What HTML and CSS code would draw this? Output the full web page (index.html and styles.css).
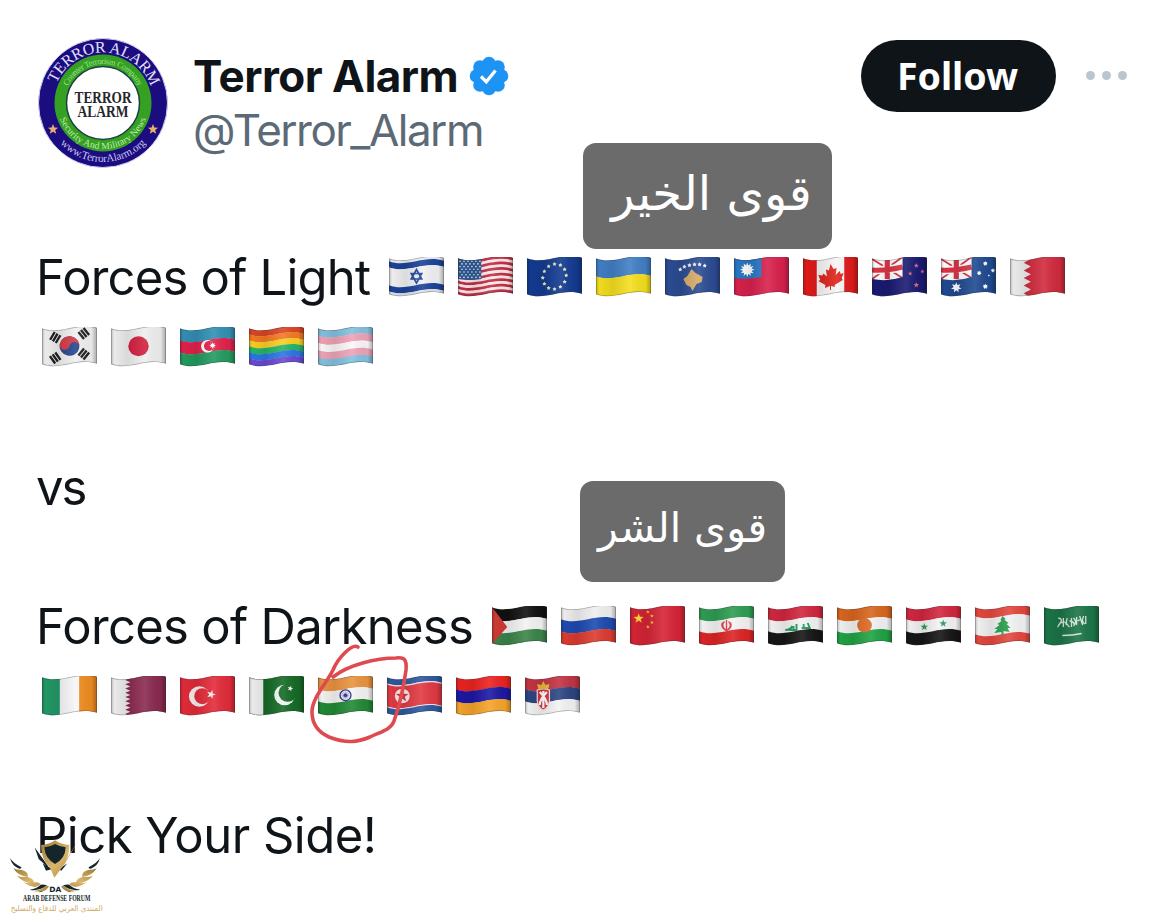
FILE: index.html
```html
<!DOCTYPE html>
<html lang="en">
<head>
  <meta charset="UTF-8" />
  <meta name="viewport" content="width=device-width, initial-scale=1.0"/>
  <title>Terror Alarm</title>
  <link rel="stylesheet" href="styles.css">
</head>
<body>
  <!-- shared flag outline and shading -->
  <svg class="defs" width="0" height="0">
    <defs>
      <clipPath id="wave"><path d="M0 1.300c18 7 34-7 54-.5v36c-20-6.500-36 7.500-54 .5z"/></clipPath>
      <linearGradient id="shade">
        <stop offset="0" stop-color="#000" stop-opacity=".22"/>
        <stop offset=".06" stop-color="#000" stop-opacity=".02"/>
        <stop offset=".3" stop-color="#000" stop-opacity=".09"/>
        <stop offset=".62" stop-color="#fff" stop-opacity=".1"/>
        <stop offset=".9" stop-color="#000" stop-opacity=".04"/>
        <stop offset="1" stop-color="#000" stop-opacity=".3"/>
      </linearGradient>
    </defs>
  </svg>

  <div class="post">
    <div class="header">
      <svg class="avatar" width="130" height="130" viewBox="-65 -65 130 130">
        <defs>
          <path id="arcTop" d="M-50.500 0A50.500 50.500 0 0 1 50.500 0"/>
          <path id="arcTopIn" d="M-39 0A39 39 0 0 1 39 0"/>
          <path id="arcBottom" d="M-59 0A59 59 0 0 0 59 0"/>
          <path id="arcBottomIn" d="M-46 0A46 46 0 0 0 46 0"/>
        </defs>
        <circle r="64.500" fill="#1b0c80" stroke="#cfcaf0"/>
        <circle r="48.500" fill="#35a021"/>
        <circle r="36.500" fill="#fff" stroke="#1c3f45" stroke-width="1.500"/>
        <g class="seal" text-anchor="middle">
          <text font-size="16" fill="#e4e0fa"><textPath href="#arcTop" startOffset="51%" textLength="122">TERROR ALARM</textPath></text>
          <text font-size="8.500" fill="#9be08b"><textPath href="#arcTopIn" startOffset="50%" textLength="88">Counter Terrorism Company</textPath></text>
          <text font-size="9.500" fill="#c3efb7"><textPath href="#arcBottomIn" startOffset="50%" textLength="112">Security And Military News</textPath></text>
          <text font-size="11" fill="#c9c4ee"><textPath href="#arcBottom" startOffset="50%" textLength="96">www.TerrorAlarm.org</textPath></text>
          <text class="seal-name" y="0" textLength="57" lengthAdjust="spacingAndGlyphs">TERROR</text>
          <text class="seal-name" y="14" textLength="51" lengthAdjust="spacingAndGlyphs">ALARM</text>
        </g>
        <path fill="#e9ad6c" d="M-50 21l1.400 3.500 3.700.2-2.900 2.400 1 3.600-3.200-2-3.200 2 1-3.600-2.900-2.400 3.700-.2zM50 21l1.400 3.500 3.700.2-2.900 2.400 1 3.600-3.200-2-3.200 2 1-3.600-2.900-2.400 3.700-.2z"/>
      </svg>

      <div class="names">
        <div class="name">
          <span class="name-text">Terror Alarm</span>
          <svg class="badge" width="40" height="40" viewBox="-20 -20 40 40">
            <g fill="#1d93f3">
              <circle r="15.500"/>
              <circle cy="-12.500" r="6.800"/><circle cy="12.500" r="6.800"/>
              <circle cx="-12.500" r="6.800"/><circle cx="12.500" r="6.800"/>
              <circle cx="-9" cy="-9" r="6.800"/><circle cx="9" cy="-9" r="6.800"/>
              <circle cx="-9" cy="9" r="6.800"/><circle cx="9" cy="9" r="6.800"/>
            </g>
            <path d="M-8 .5l5.300 5.200L6.500-5.500" fill="none" stroke="#fff" stroke-width="3.300"/>
          </svg>
        </div>
        <div class="handle">@Terror_Alarm</div>
      </div>

      <button class="follow">Follow</button>
      <div class="more"><i></i><i></i><i></i></div>
    </div>

    <div class="content">
      <div class="line">
        <span class="text light">Forces of Light</span>
        <span class="flags" data-flags="il us eu ua xk tw ca nz au bh"></span>
      </div>
      <div class="line indent"><span class="flags" data-flags="kr jp az rainbow trans"></span></div>
      <div class="line"></div>
      <div class="line"><span class="text vs">vs</span></div>
      <div class="line"></div>
      <div class="line">
        <span class="text dark">Forces of Darkness</span>
        <span class="flags" data-flags="ps ru cn ir iq ne sy lb sa"></span>
      </div>
      <div class="line indent"><span class="flags" data-flags="ie qa tr pk in kp am rs"></span></div>
      <div class="line"></div>
      <div class="line"><span class="text pick">Pick Your Side!</span></div>
    </div>

    <div class="note good" lang="ar" dir="rtl"><span>قوى الخير</span></div>
    <div class="note evil" lang="ar" dir="rtl"><span>قوى الشر</span></div>

    <svg class="scribble" width="110" height="110" viewBox="304 640 110 110">
      <path d="M358 647C352 643 338 658 333 670C326 684 312 698 312 712C312 724 318 732 329 737C347 744 358 742 370 737C380 732 391 730 394 721C400 704 403 692 406 670C407 659 404 657 396 658C376 658 348 665 333 677"/>
    </svg>

    <svg class="watermark" width="110" height="116" viewBox="0 0 330 348">
      <defs>
        <linearGradient id="gold" x2="1" y2="1">
          <stop offset="0" stop-color="#9b7933"/>
          <stop offset=".5" stop-color="#d9b66c"/>
          <stop offset="1" stop-color="#a88237"/>
        </linearGradient>
      </defs>
      <path fill="#14262c" d="M104 142l42 59 14 8-10-2-34-30zM128 190l26 18-16 4zM202 190l-18 22-8-4z"/>
      <path fill="url(#gold)" d="M123 135q25-1 42-14 18 13 43 14-1 30-10 46l38-62-40 70-33 44-14-32q-25-20-26-66z"/>
      <path fill="#14262c" d="M133 142q18-1 32-10 16 9 32 10-1 34-32 50-30-16-32-50z"/>
      <g id="wing">
        <path fill="#14262c" d="M30 174q8 14 33 27 4 5-5 5-22-8-28-32zM89 269q22-3 33-15 13-3 24 6-12 14-30 17 13-9 17-15-22 13-44 7z"/>
        <path fill="url(#gold)" d="M40 205q9 5 26 5 21 6 17 21-29-3-43-26zM51 227q13 6 30 3 22 6 20 19-29 2-50-22zM70 247q14 5 29-1 19 0 23 6-15 20-52-5zM102 273q24-3 34-15 6-2 10 2-14 20-44 13z"/>
      </g>
      <use href="#wing" transform="matrix(-1 0 0 1 330 0)"/>
      <text class="wm-da" x="166" y="277" textLength="36" lengthAdjust="spacingAndGlyphs">DA</text>
      <text class="wm-en" x="170" y="302" textLength="202" lengthAdjust="spacingAndGlyphs">ARAB DEFENSE FORUM</text>
      <text class="wm-ar" x="170" y="333" textLength="276" lengthAdjust="spacingAndGlyphs">المنتدى العربي للدفاع والتسليح</text>
    </svg>
  </div>

  <script src="flags.js"></script>
</body>
</html>
```
FILE: flags.js
```js
// wavy horizontal band
const band = (y, h, c) =>
  `<path fill="${c}" d="M0 ${y}c18 7 34-7 54-.5v${h}c-20-6.500-36 7.500-54 .5z"/>`;

// stack of bands, each one [color, weight] or just color
function bands(...list) {
  const rows = list.map(r => Array.isArray(r) ? r : [r, 1]);
  const total = rows.reduce((a, r) => a + r[1], 0);
  let y = 1.3;
  return rows.map(([c, w]) => {
    const h = 36 * w / total;
    const out = band(y, h + 0.3, c);
    y += h;
    return out;
  }).join('');
}

const rect = (x, w, c) => `<rect x="${x}" y="-2" width="${w}" height="44" fill="${c}"/>`;
const dot = (x, y, r, c) => `<circle cx="${x}" cy="${y}" r="${r}" fill="${c}"/>`;

function star(x, y, r, c, n = 5, inner = 0.4, turn = 0) {
  const pts = [];
  for (let i = 0; i < n * 2; i++) {
    const a = Math.PI * i / n - Math.PI / 2 + turn;
    const q = i % 2 ? r * inner : r;
    pts.push((x + q * Math.cos(a)).toFixed(2) + ',' + (y + q * Math.sin(a)).toFixed(2));
  }
  return `<polygon points="${pts.join(' ')}" fill="${c}"/>`;
}

const union = bg =>
  `<path d="M0 2L30 21M0 22L30 0" stroke="#fff" stroke-width="4.500"/>
   <path d="M0 2L30 21M0 22L30 0" stroke="#d8323f" stroke-width="1.800"/>
   <path d="M15 0v22M0 13q14 1 30-3" stroke="#fff" stroke-width="8" fill="none"/>
   <path d="M15 0v22M0 13q14 1 30-3" stroke="#dc3545" stroke-width="5" fill="none"/>
   <path fill="${bg}" d="M0 22q16 3 30-2h24v22H0zM30-2h24v24H30z"/>`;

const saw = (x, w, n, bg, c) => {
  let d = `M54-2H${x}`;
  for (let i = 0; i < n; i++) {
    const h = 38 / n;
    d += `L${x + w} ${(2 + h * i).toFixed(1)}L${x} ${(2 + h * (i + 0.5)).toFixed(1)}`;
  }
  return rect(0, 54, bg) + `<path fill="${c}" d="${d}L${x + w} 41H54z"/>`;
};

const euStars = () => {
  let s = '';
  for (let i = 0; i < 12; i++) {
    const a = i * Math.PI / 6;
    s += star(27 + 11.5 * Math.sin(a), 19.6 - 12.5 * Math.cos(a) - 1.2 * Math.sin(a), 2.1, '#e8efc2', 5, 0.55);
  }
  return s;
};

const usStars = () => {
  let s = '';
  for (let r = 0; r < 7; r++)
    for (let c = 0; c < 6; c++)
      s += dot(2 + c * 3.9 + (r % 2 ? 1.9 : 0), 4.2 + r * 2.7, 0.8, '#e5f0fa');
  return s;
};

const bars = (x, y, turn) =>
  `<g transform="translate(${x} ${y}) rotate(${turn})" stroke="#222" stroke-width="2.300">
   <path d="M-4.500-3.200h9M-4.500 0h9M-4.500 3.200h9"/></g>`;

const flags = {
  il: bands(['#eceef3', 3], ['#1b4398', 6], ['#f1f1f4', 18], ['#1b4398', 6], ['#dfe2ea', 3]) +
    '<path fill="none" stroke="#2449a0" stroke-width="1.600" d="M27 12.500l5.200 9.500H21.800zM27 26l-5.200-9.500h10.400z"/>',
  us: bands(...Array.from({ length: 13 }, (_, i) => i % 2 ? '#fbe8ea' : '#c22f43')) +
    '<path fill="#2d5792" d="M0 0h23v22q-11 2-23 0z"/>' + usStars(),
  eu: rect(0, 54, '#143b92') + euStars(),
  ua: bands('#427fc6', '#f5df1e'),
  xk: rect(0, 54, '#2c4c94') +
    [[15, 12.5], [19, 9.7], [24, 8.3], [29, 7.5], [34, 7.5], [39, 8.7]].map(p => star(p[0], p[1], 2.2, '#f1f3fa', 5, 0.55)).join('') +
    '<path fill="#d6ab68" d="M26 12l4 4 7 4-1 5-5 2-4 7-2-4-4-2-3-6 4-3z"/>',
  tw: rect(0, 54, '#d9214d') + '<path fill="#2879c5" d="M0 0h27v20q-13 3-27 1z"/>' +
    star(13, 12.7, 7.2, '#fff', 12, 0.6) + dot(13, 12.7, 4, '#fff'),
  ca: rect(0, 54, '#f8f5f5') + rect(0, 13.5, '#e01a1a') + rect(40.5, 14, '#e01a1a') +
    '<path fill="#df241d" d="M27 7l3 5 3-1-1 7 4-4 1 3 3-1-2 5 1 2-8 5 .5 2-4-1v4h-1v-4l-5 2 .5-3-7-4 2-1-2-5 4 .5 1-2 3.500 3-1-7 3 1z"/>',
  nz: union('#1a1b72') + star(43.5, 8.7, 2.6, '#d86b8a') + star(37.5, 16.5, 2.4, '#d86b8a') +
    star(49.5, 14.5, 2.2, '#d86b8a') + star(43.5, 28, 3, '#d86b8a'),
  au: union('#204a91') + star(15, 30.5, 5.3, '#fff', 7, 0.5) + star(43.5, 6.5, 2.4, '#fff', 7, 0.6) +
    star(37.5, 16, 2.4, '#fff', 7, 0.6) + star(51, 13.5, 2.2, '#fff', 7, 0.6) +
    star(47, 18.5, 1.3, '#fff') + star(43.5, 29.5, 2.7, '#fff', 7, 0.6),
  bh: saw(13.5, 7, 5, '#efeeee', '#d12b3e'),
  kr: rect(0, 54, '#f0f0f1') + `<g transform="rotate(12 27 19)">${dot(27, 19, 9.8, '#27478f')}
    <path fill="#d53a46" d="M17.200 19a9.800 9.800 0 0 1 19.600 0a4.900 4.900 0 0 0-9.800 0a4.900 4.900 0 0 1-9.800 0z"/></g>` +
    bars(13, 10.5, -60) + bars(41, 6.5, 52) + bars(13, 31, 55) + bars(41, 27, -52),
  jp: rect(0, 54, '#efeff0') + dot(27, 19.3, 10, '#d3203f'),
  az: bands('#3390b5', '#e2214b', '#239b60') + dot(27, 19.3, 6.3, '#fff') + dot(28.6, 19, 5.1, '#e2214b') +
    star(32, 18.5, 3.3, '#fff', 8, 0.5),
  rainbow: bands('#db4527', '#f47a21', '#f9cf24', '#27b567', '#2b77e3', '#6a4ad4'),
  trans: bands('#84c1df', '#efa3b7', '#faf7f9', '#efa3b7', '#84c1df'),
  ps: bands('#111', '#f3f3f3', '#3b8449') + '<path fill="#d13a35" d="M0 1l15 20L0 38z"/>',
  ru: bands('#f0f0f1', '#1e4bb1', '#dc3c30'),
  cn: rect(0, 54, '#d62436') + star(8.5, 12.5, 5.2, '#fbdc35') + star(17.5, 6, 2, '#f6c831') +
    star(21.5, 10, 2, '#f6c831') + star(21.5, 16.5, 2, '#f6c831') + star(17.5, 21, 2, '#f6c831'),
  ir: bands('#2f9d53', '#f5f3f3', '#dc2425') +
    '<path fill="none" stroke="#dc3c45" stroke-width="1.300" d="M27 14v11M25 15.500q-4 4 1 8.500M29 15.500q4 4-1 8.500M23 16.500q-2 5 3.500 8M31 16.500q2 5-3.500 8"/>',
  iq: bands('#d2273f', '#f3f3f3', '#161616') +
    '<path fill="none" stroke="#239a5c" stroke-width="1.900" d="M17 24q5 0 7-4m-3 4h7v-6m-3 2v4M33 22h8l-2-5m-4 5v-4"/>',
  ne: bands('#d9661f', '#f3f2f2', '#20a344') + dot(27, 19.3, 7.2, '#dd6b24'),
  sy: bands('#d2273f', '#f3f3f3', '#161616') + star(18, 21, 4, '#2b9a5f') + star(36.5, 17.5, 4, '#2b9a5f'),
  lb: bands(['#e4483f', 1], ['#f3f3f3', 2], ['#e4483f', 1]) +
    '<path fill="#2a9f4e" d="M27 10l3 3-1 1 4 3-2 1 4 4-3 0 2 4-6-1v4h-2v-3l-7 1 3-4-3 0 5-4-2-1 4-3-1-1z"/>',
  sa: rect(0, 54, '#1c7548') +
    '<path fill="none" stroke="#d2e5da" stroke-width="1.300" d="M14 12q5 1 2 5t-2 4m5-9v9m-2-4q4-3 5 2m1-7q-3 5 2 9m2-9v9m-2-6q4 0 5 4m-1-7q4 4 0 8m3-9v8m1-4q4-3 4 2m-2-7l3 9m1-9q-3 5 1 8m1-8v8"/><path fill="none" stroke="#d2e5da" stroke-width="1.500" d="M18 29.500q10 0 19-2"/>',
  ie: rect(0, 54, '#f7f7f7') + rect(0, 17.5, '#239a68') + rect(36.5, 18, '#ef8d20'),
  qa: saw(14, 5, 9, '#efeeee', '#8a2a50'),
  tr: rect(0, 54, '#e32b3a') + dot(19, 20.5, 10.2, '#f8eef0') + dot(22, 20.2, 8, '#e32b3a') +
    star(30.5, 18.5, 4.6, '#f8eef0', 5, 0.4, 0.3),
  pk: rect(0, 54, '#156b26') + rect(0, 14, '#efefef') + dot(35, 19, 10.3, '#f1f5f1') + dot(38, 16.8, 9, '#156b26') +
    star(40.5, 12.5, 3, '#f1f5f1', 5, 0.4, 0.3),
  in: bands('#ea9440', '#f4f4f4', '#218a35') +
    '<circle cx="27" cy="19.300" r="5.400" fill="#e4e6f6" stroke="#2c2f88" stroke-width="1.300"/>' +
    star(27, 19.3, 4.5, '#6063a7', 12, 0.3) + dot(27, 19.3, 1.6, '#2c2f88'),
  kp: bands(['#2e59a0', 6], ['#f1e6e8', 1.2], ['#e13a43', 22], ['#f1e6e8', 1.2], ['#2e59a0', 6]) +
    dot(15, 20, 7.3, '#f7e9e9') + star(15, 20, 6.6, '#d9353f'),
  am: bands('#ec2321', '#1c18a5', '#f5a42a'),
  rs: bands('#c43443', '#2c4583', '#f3f3f3') +
    `<path fill="#d9323d" stroke="#f3dfe0" stroke-width="1.200" d="M12 14q6-2 12 0v11q-1 7-6 9-5-2-6-9z"/>
     <path fill="#e9b53c" d="M13 13l-1-5 4 1 2-4 2 4 4-1-1 5z"/>
     <path stroke="#fff" stroke-width="2.200" fill="none" d="M14.500 16q7 7 7 13M21.500 16q-7 7-7 13M18 15v17"/>`
};

document.querySelectorAll('[data-flags]').forEach(el => {
  el.innerHTML = el.dataset.flags.split(' ').map(id => `
    <svg class="flag" width="55" height="40" viewBox="0 0 54 40" preserveAspectRatio="none">
      <g clip-path="url(#wave)">${flags[id]}
        <path d="M0 1.300c18 7 34-7 54-.5v36c-20-6.500-36 7.500-54 .5z" fill="url(#shade)" stroke="#333" stroke-opacity=".35" stroke-width="1.600"/>
      </g>
    </svg>`).join('');
});
```
FILE: styles.css
```css
* {
  box-sizing: border-box;
}

body {
  margin: 0;
  background: #fff;
  color: #0f1419;
  font-family: Inter, "Liberation Sans", sans-serif;
}

.defs {
  position: absolute;
}

.post {
  position: relative;
  width: 1170px;
  height: 916px;
  overflow: hidden;
}

.header {
  display: flex;
  height: 242px;
  padding: 38px 42px 0 38px;
}

.avatar {
  flex: none;
}

.seal {
  font-family: "Liberation Serif", serif;
}

.seal-name {
  font-size: 17px;
  font-weight: bold;
  fill: #26262c;
}

.names {
  margin-left: 25px;
  padding-top: 10px;
}

.name {
  display: flex;
  align-items: center;
  height: 56px;
  font-size: 44px;
  font-weight: 700;
  letter-spacing: -.5px;
}

.badge {
  margin-left: 11px;
}

.handle {
  height: 54px;
  line-height: 54px;
  margin-top: -1px;
  font-size: 44px;
  letter-spacing: -1.5px;
  color: #5b6a76;
}

.follow {
  width: 195px;
  height: 72px;
  margin: 2px 0 0 auto;
  padding: 0 2px 2px 0;
  border: none;
  border-radius: 36px;
  background: #0f1419;
  color: #fff;
  font-family: "Noto Sans", sans-serif;
  font-size: 37.500px;
  font-weight: 700;
}

.more {
  display: flex;
  gap: 7px;
  margin: 33px 1px 0 30px;
}

.more i {
  width: 9px;
  height: 9px;
  border-radius: 50%;
  background: #b9c6cf;
}

.content {
  padding-left: 36px;
}

.line {
  display: flex;
  align-items: center;
  height: 69.8px;
  font-size: 49px;
  white-space: nowrap;
}

.text {
  padding-top: 2px;
}

.indent {
  padding-left: 6px;
}

.light {
  width: 353px;
  letter-spacing: -.8px;
}

.dark {
  width: 456px;
  letter-spacing: -.7px;
}

.vs {
  letter-spacing: -2px;
}

.pick {
  padding-top: 0;
  letter-spacing: -.5px;
}

.flags {
  display: flex;
  gap: 14px;
}

.flag {
  display: block;
  flex: none;
}

.note {
  position: absolute;
  display: flex;
  justify-content: center;
  align-items: center;
  border-radius: 13px;
  background: #6b6b6b;
  color: #fff;
  font-family: "DejaVu Sans", sans-serif;
  line-height: 1;
}

.good {
  left: 583px;
  top: 143px;
  width: 249px;
  height: 106px;
  padding: 0 0 7px 8px;
  font-size: 48px;
}

.evil {
  left: 580px;
  top: 481px;
  width: 205px;
  height: 101px;
  padding-bottom: 7px;
  font-size: 41px;
}

.scribble {
  position: absolute;
  left: 304px;
  top: 640px;
  fill: none;
  stroke: #df4a50;
  stroke-width: 3.6;
  stroke-linecap: round;
  stroke-linejoin: round;
}

.watermark {
  position: absolute;
  left: 0;
  top: 800px;
  text-anchor: middle;
}

.wm-da {
  font: bold 22px "DejaVu Sans", sans-serif;
  fill: #14262c;
}

.wm-en {
  font: bold 22px "Liberation Serif", serif;
  fill: #14262c;
}

.wm-ar {
  font: 24px "DejaVu Sans", sans-serif;
  fill: #cfa968;
}
```
